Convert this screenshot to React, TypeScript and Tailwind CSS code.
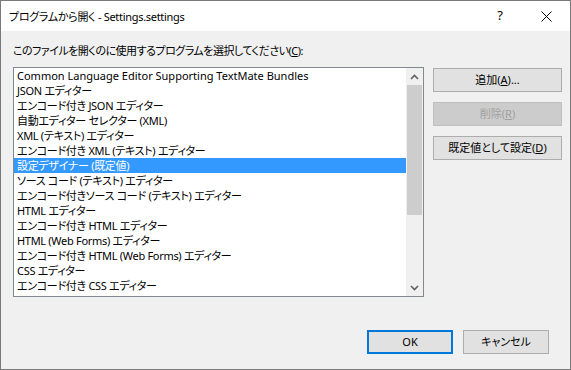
import React from "react";

const items = [
  "Common Language Editor Supporting TextMate Bundles",
  "JSON エディター",
  "エンコード付き JSON エディター",
  "自動エディター セレクター (XML)",
  "XML (テキスト) エディター",
  "エンコード付き XML (テキスト) エディター",
  "設定デザイナー (既定値)",
  "ソース コード (テキスト) エディター",
  "エンコード付きソース コード (テキスト) エディター",
  "HTML エディター",
  "エンコード付き HTML エディター",
  "HTML (Web Forms) エディター",
  "エンコード付き HTML (Web Forms) エディター",
  "CSS エディター",
  "エンコード付き CSS エディター",
];

function Chevron({ up }: { up?: boolean }) {
  return (
    <svg width="9" height="6" viewBox="0 0 9 6">
      <path
        d={up ? "M1 5 L4.5 1.5 L8 5" : "M1 1 L4.5 4.5 L8 1"}
        fill="none"
        stroke="#606060"
        strokeWidth="1.6"
      />
    </svg>
  );
}

export default function App() {
  return (
    <div className="w-[571px] h-[370px] border border-[#7a7a7a] flex flex-col font-['Noto_Sans','Noto_Sans_CJK_JP',sans-serif] text-[11px] text-black [font-feature-settings:'palt'] overflow-hidden">
      <div className="h-[30px] bg-white flex items-center shrink-0">
        <div className="pl-[8px] flex-1 leading-none tracking-[-0.3px]">プログラムから開く - Settings.settings</div>
        <div className="w-[46px] text-center text-[13px]">?</div>
        <div className="w-[46px] flex justify-center mr-[1px]">
          <svg width="11" height="11" viewBox="0 0 11 11">
            <path d="M0.5 0.5 L10.5 10.5 M10.5 0.5 L0.5 10.5" stroke="#000" strokeWidth="1" />
          </svg>
        </div>
      </div>
      <div className="flex-1 bg-[#f0f0f0] flex flex-col pl-[12px] pr-[8px]">
        <div className="mt-[12px] h-[15px] leading-[15px] tracking-[-0.5px]">
          このファイルを開くのに使用するプログラムを選択してください(<span className="underline">C</span>):
        </div>
        <div className="mt-[9px] flex gap-[9px]">
          <div className="w-[411px] h-[230px] border border-[#828790] bg-white flex">
            <div className="flex-1 overflow-hidden">
              {items.map((t, i) => (
                <div
                  key={i}
                  className={
                    "h-[15px] leading-[15px] pl-[3px] whitespace-nowrap " +
                    (i === 0 ? "" : "tracking-[-0.3px] ") +
                    (i === 6 ? "bg-[#3399ff] text-white" : "")
                  }
                >
                  {t}
                </div>
              ))}
            </div>
            <div className="w-[17px] bg-[#f0f0f0] flex flex-col">
              <div className="h-[17px] flex items-center justify-center">
                <Chevron up />
              </div>
              <div className="h-[130px] mx-[1px] bg-[#cdcdcd]" />
              <div className="flex-1" />
              <div className="h-[17px] flex items-center justify-center">
                <Chevron />
              </div>
            </div>
          </div>
          <div className="w-[129px] flex flex-col gap-[10px] pt-[1px]">
            <div className="h-[24px] border border-[#adadad] bg-[#e1e1e1] flex items-center justify-center">
              追加(<span className="underline">A</span>)...
            </div>
            <div className="h-[24px] border border-[#bfbfbf] bg-[#cccccc] text-[#a0a0a0] flex items-center justify-center">
              削除(<span className="underline">R</span>)
            </div>
            <div className="h-[24px] border border-[#adadad] bg-[#e1e1e1] flex items-center justify-center">
              既定値として設定(<span className="underline">D</span>)
            </div>
          </div>
        </div>
        <div className="mt-[33px] flex justify-end gap-[10px] pr-[13px]">
          <div className="w-[86px] h-[24px] border-2 border-[#0078d7] bg-[#e1e1e1] flex items-center justify-center">
            OK
          </div>
          <div className="w-[86px] h-[24px] border border-[#adadad] bg-[#e1e1e1] flex items-center justify-center">
            キャンセル
          </div>
        </div>
      </div>
    </div>
  );
}
